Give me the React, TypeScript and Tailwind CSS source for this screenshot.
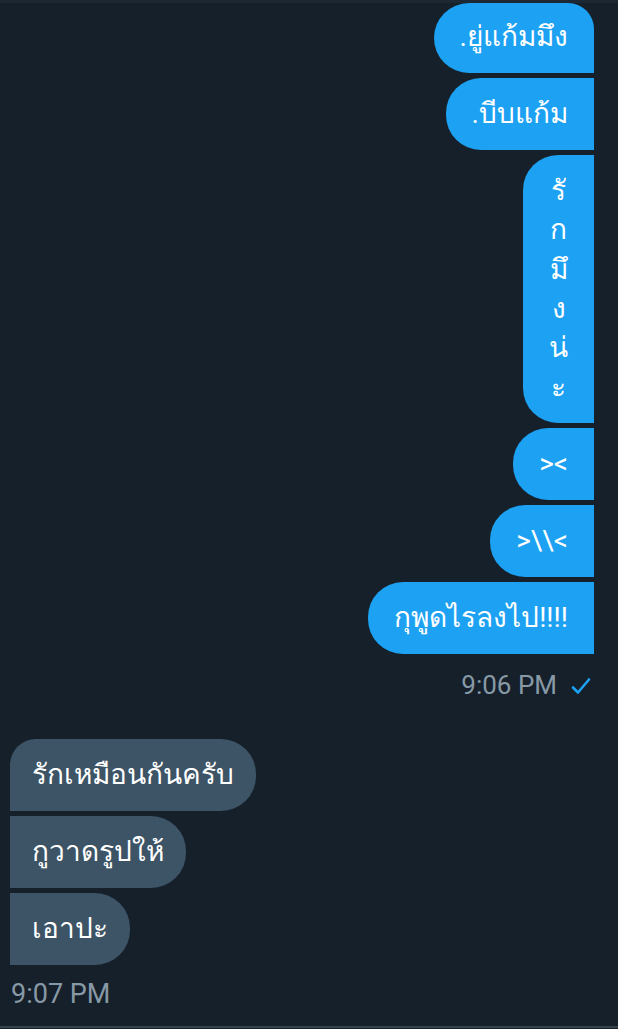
import React from "react";

const sent = [".ยู่แก้มมึง", ".บีบแก้ม", "รั\nก\nมึ\nง\nน่\nะ", "><", ">\\\\<", "กุพูดไรลงไป!!!!"];
const received = ["รักเหมือนกันครับ", "กูวาดรูปให้", "เอาปะ"];

const Check = () => (
  <svg width="20" height="20" viewBox="0 0 20 20" className="ml-[14px] mt-[2px]">
    <path d="M2 11.5 L7 16.5 L18 3.5" fill="none" stroke="#1da1f2" strokeWidth="2.6" strokeLinecap="round" strokeLinejoin="round" />
  </svg>
);

const App = () => {
  return (
    <div
      className="w-[618px] h-[1029px] bg-[#15202b] flex flex-col overflow-hidden"
      style={{ fontFamily: 'Roboto, "Noto Sans", "DejaVu Sans", sans-serif' }}
    >
      <div className="h-[3px] bg-[#1c2834]" />
      <div className="flex flex-col items-end gap-[5px] pr-[24px]">
        {sent.map((t, i) => (
          <div
            key={i}
            className={`bg-[#1da1f2] text-white text-[28px] px-[26px] rounded-l-[35px] whitespace-pre-line text-center ${
              i === 0 ? "rounded-tr-[26px] pt-[14px] pb-[16px]" : "py-[16px]"
            } ${i === 2 ? "leading-[39.33px]" : "leading-[40px]"}`}
          >
            {t}
          </div>
        ))}
      </div>
      <div className="flex items-center justify-end pr-[27px] mt-[16px] text-[26px] leading-[30px] text-[#8899a6]">
        <span>9:06 PM</span>
        <Check />
      </div>
      <div className="flex flex-col items-start gap-[5px] pl-[10px] mt-[39px]">
        {received.map((t, i) => (
          <div
            key={i}
            className={`bg-[#3d5466] text-white text-[28px] leading-[40px] px-[22px] py-[16px] rounded-r-[35px] ${
              i === 0 ? "rounded-tl-[26px]" : ""
            }`}
          >
            {t}
          </div>
        ))}
      </div>
      <div className="pl-[11px] mt-[14px] text-[27px] leading-[30px] text-[#8899a6]">9:07 PM</div>
      <div className="mt-auto mb-[1px] h-[2px] bg-[#38444d]" />
    </div>
  );
};

export default App;
